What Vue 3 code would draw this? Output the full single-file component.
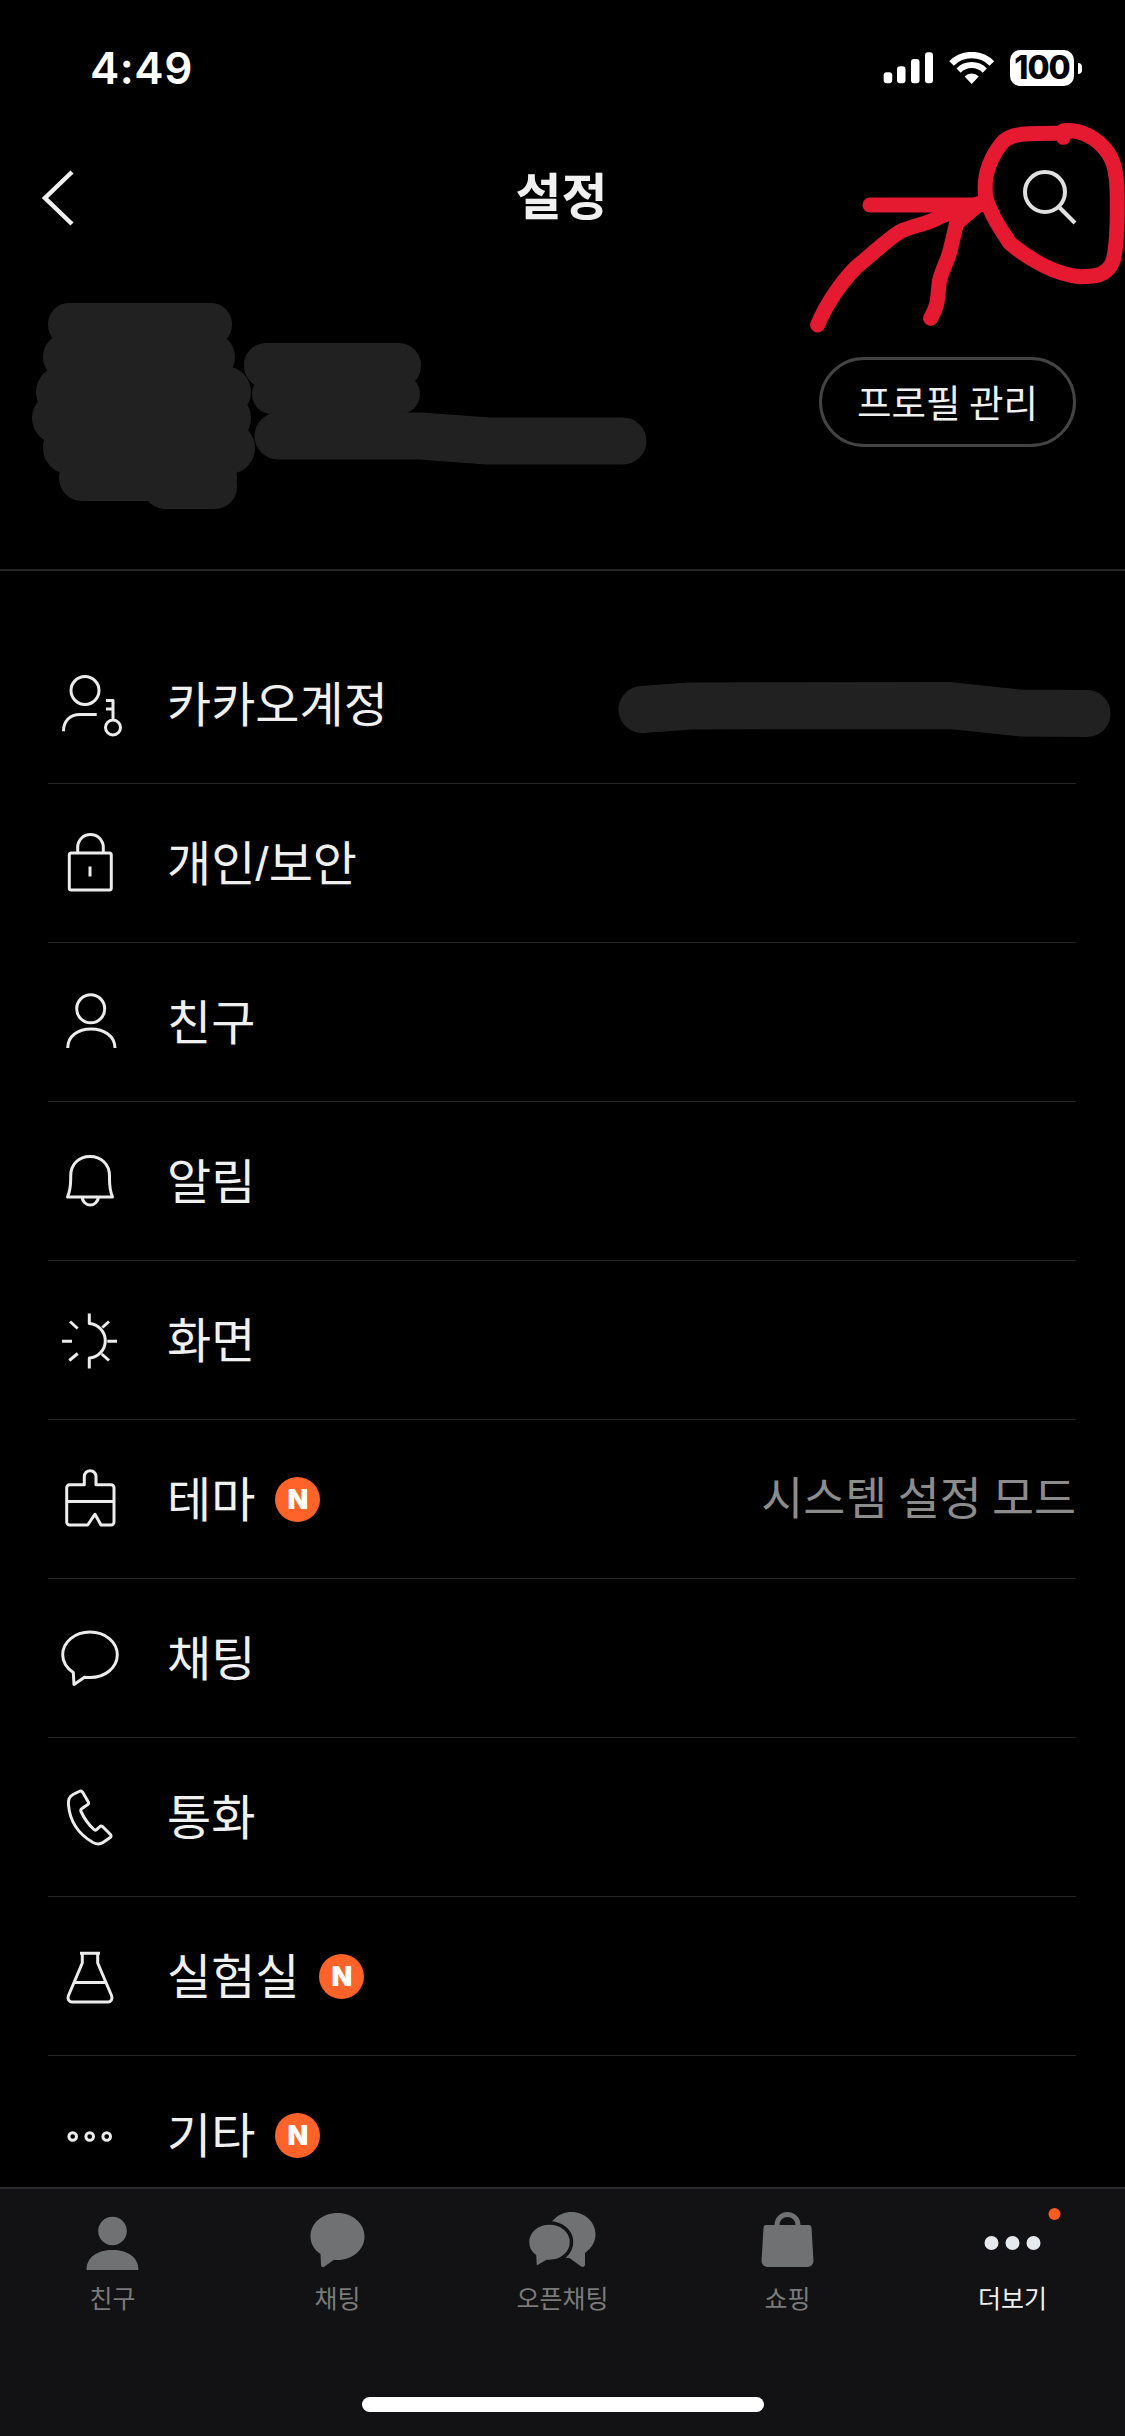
<script setup>
const c = (x, y, r) => `M${x - r} ${y}a${r} ${r} 0 1 0 ${2 * r} 0a${r} ${r} 0 1 0 ${-2 * r} 0Z`

const rows = [
  { label: '카카오계정', d: c(35, 26.5, 14) + 'M13.5 67.2C13.5 57 20 50.5 30 50.5H46.7' + c(63, 63.5, 7.5) + 'M63 56V36.5H56M56 45H63' },
  { label: '개인/보안', d: 'M21.3 30H59.3a2 2 0 0 1 2 2V65a2 2 0 0 1-2 2H21.3a2 2 0 0 1-2-2V32a2 2 0 0 1 2-2ZM27.7 30V24.3a12.8 12.8 0 0 1 25.6 0V30M40 43.5V53.5' },
  { label: '친구', d: c(40.7, 26.8, 14) + 'M17.7 66C17.7 54 28 47 41 47S65 54 65 66' },
  { label: '알림', d: 'M17.5 56H62.5C60 50 59.5 46 59.5 38V35C59.5 23 51 15.5 40 15.5S20.7 23 20.7 35V38C20.7 46 20 50 17.5 56ZM32 56A8.3 9 0 0 0 48.5 56' },
  { label: '화면', d: 'M39.3 13.5V23.5A17.3 17.3 0 0 1 39.3 58V68.5M57.3 41.2H67M12 41.2H22M20 21.5L27.7 28.5M19.3 60.5L27.7 53.5M59 21.5L52.3 27.5M59 60.5L51.7 54' },
  { label: '테마', badge: true, value: '시스템 설정 모드', d: 'M34.3 25.8V17.5a5.85 5.85 0 0 1 11.7 0V25.8H61a3 3 0 0 1 3 3V63a3 3 0 0 1-3 3H51L45 55.2L37.7 66H19.7a3 3 0 0 1-3-3V28.8a3 3 0 0 1 3-3ZM16.7 42.5H64' },
  { label: '채팅', d: 'M23.3 54.5C16.5 50 12.7 44 12.7 36.8C12.7 24 24.8 13.9 40 13.9S67.3 24 67.3 36.8S55 59.6 40 59.6C38 59.6 36 59.4 34.5 59.2L24 66.5Z' },
  { label: '통화', d: 'M29 14.5a3 3 0 0 1 3.5 .5L38.3 25a2 2 0 0 1-.5 2.5L32 31.5a2.5 2.5 0 0 0-1 3C34 41 39 48 44 52.5a2 2 0 0 0 2.5 .2L50 49.5a2 2 0 0 1 2.5 0L60.5 57.5a2 2 0 0 1-.3 3L53 65.5C50 67.5 46 67 43 65.5C30 58 20 46 18.5 28C18 23 20 19 23 17.5Z' },
  { label: '실험실', badge: true, d: 'M30 17.2H50M32.3 17.2V27L18.5 59.5C17 63 19 66 22 66H58C61 66 63 63 61.5 59.5L47.7 27V17.2M25 46.5H55' },
  { label: '기타', badge: true, d: c(22.7, 40.5, 3.8) + c(39.7, 40.5, 3.8) + c(56.7, 40.5, 3.8) },
]

const gray = '#707173'
const tabs = [
  { label: '친구', cx: 112.5, parts: [{ d: c(112, 2231, 14.3) + 'M86 2270C86 2257 97 2250 112 2250S138 2257 138 2270Z', fill: gray }] },
  { label: '채팅', cx: 337.5, parts: [{ d: 'M337 2213C322 2213 310 2223 310 2236.5C310 2244 314 2250 320 2254L320.5 2265C320.6 2267 322.5 2267.6 324 2266.5L333.5 2259.8C334.7 2260 335.8 2260 337 2260C352 2260 364 2249.5 364 2236.5S352 2213 337 2213Z', fill: gray }] },
  { label: '오픈채팅', cx: 562.5, parts: [
    { d: 'M571 2212C558 2212 547 2222 547 2235C547 2248 557 2258 569 2258L580 2266C582 2267.5 584.5 2267 584.5 2264.5L584.5 2253C591 2248 595 2242 595 2234C595 2222 584 2212 571 2212Z', fill: gray },
    { d: 'M549 2223C537 2223 527 2231 527 2242C527 2249 530 2253 534 2256L534.5 2265C534.6 2267 536.5 2267.6 538 2266.5L546.5 2261.4L549 2261.5C561 2261.5 571 2253 571 2242S561 2223 549 2223Z', fill: gray, stroke: '#121214', sw: 3.5 },
  ] },
  { label: '쇼핑', cx: 787.5, parts: [
    { d: 'M766 2225H808a3 3 0 0 1 3 3L813 2261a6 6 0 0 1-6 6H767a6 6 0 0 1-6-6L763 2228a3 3 0 0 1 3-3Z', fill: gray },
    { d: 'M776.5 2226V2225a10.5 10.5 0 0 1 21 0V2226', fill: 'none', stroke: gray, sw: 5 },
  ] },
  { label: '더보기', cx: 1012.5, active: true, parts: [
    { d: c(991, 2243, 7) + c(1012, 2243, 7) + c(1033, 2243, 7), fill: '#e6e9ee' },
    { d: c(1054, 2214, 6), fill: '#ff5a1f' },
  ] },
]
</script>

<template>
  <div class="page">
    <div class="status">
      <span class="time">4:49</span>
      <div class="status-right">
        <svg class="signal" width="50" height="32" viewBox="0 0 50 32">
          <rect x="0.7" y="20.3" width="8.5" height="11" rx="3" />
          <rect x="14" y="14.3" width="8.5" height="17" rx="3" />
          <rect x="28" y="7" width="8.5" height="24.3" rx="3" />
          <rect x="42" y="0.3" width="8" height="31" rx="3" />
        </svg>
        <svg class="wifi" width="46" height="32" viewBox="0 0 46 32">
          <path d="M2.55 11.45A28.5 28.5 0 0 1 42.85 11.45" fill="none" stroke="#fff" stroke-width="6.5" />
          <path d="M9.62 18.52A18.5 18.5 0 0 1 35.78 18.52" fill="none" stroke="#fff" stroke-width="6" />
          <path d="M22.7 32L15.6 24.5A10 10 0 0 1 29.8 24.5Z" fill="#fff" />
        </svg>
        <div class="battery"><span class="battery-level">100</span></div>
        <span class="battery-cap"></span>
      </div>
    </div>

    <div class="nav">
      <svg class="back" width="40" height="60" viewBox="0 0 40 60">
        <path d="M32 4L5 30L32 56" fill="none" stroke="#f0f0f0" stroke-width="4.5" />
      </svg>
      <span class="title">설정</span>
      <svg class="search" width="60" height="64" viewBox="0 0 60 64">
        <circle cx="25" cy="26" r="20" fill="none" stroke="#e0e0e0" stroke-width="4" />
        <path d="M38 40L55 57" fill="none" stroke="#e0e0e0" stroke-width="4" />
      </svg>
    </div>

    <div class="profile">
      <button class="manage">프로필 관리</button>
    </div>

    <div class="list">
      <div v-for="row in rows" :key="row.label" class="row">
        <svg class="row-icon" width="80" height="80" viewBox="0 0 80 80">
          <path :d="row.d" fill="none" stroke="#ececec" stroke-width="3" stroke-linejoin="round" />
        </svg>
        <span class="row-label">{{ row.label }}</span>
        <span v-if="row.badge" class="badge">N</span>
        <span v-if="row.value" class="row-value">{{ row.value }}</span>
      </div>
    </div>

    <div class="tabbar">
      <div class="tabs">
        <div v-for="tab in tabs" :key="tab.label" class="tab" :class="{ active: tab.active }">
          <svg width="120" height="70" :viewBox="`${tab.cx - 60} 2205 120 70`">
            <path v-for="(p, i) in tab.parts" :key="i" :d="p.d" :fill="p.fill" :stroke="p.stroke || 'none'" :stroke-width="p.sw || 0" />
          </svg>
          <span class="tab-label">{{ tab.label }}</span>
        </div>
      </div>
      <div class="home"></div>
    </div>

    <svg class="overlay" width="1125" height="2436" viewBox="0 0 1125 2436">
      <g fill="#212121">
        <rect x="48" y="303" width="184" height="43" rx="21" />
        <rect x="43" y="333" width="192" height="48" rx="24" />
        <rect x="36" y="366" width="215" height="52" rx="26" />
        <rect x="32" y="392" width="219" height="52" rx="26" />
        <rect x="43" y="422" width="212" height="52" rx="26" />
        <rect x="59" y="455" width="178" height="46" rx="23" />
        <rect x="143" y="465" width="94" height="44" rx="22" />
        <rect x="244" y="343" width="177" height="45" rx="22" />
        <rect x="252" y="374" width="168" height="40" rx="20" />
      </g>
      <path d="M278 436H420L488 441H623" fill="none" stroke="#212121" stroke-width="47" stroke-linecap="round" stroke-linejoin="round" />
      <path d="M642 709.5L690 706L950 705.5L1020 713L1087 713.5" fill="none" stroke="#212121" stroke-width="47" stroke-linecap="round" stroke-linejoin="round" />
      <g transform="translate(780 100) scale(0.3333)" fill="none" stroke="#e5192f" stroke-width="45" stroke-linecap="round" stroke-linejoin="round">
        <path d="M850 112V92C900 88 950 110 985 160C1012 200 1012 260 1012 320C1012 380 1010 440 1000 480C985 525 950 530 900 530C830 525 750 480 690 430C660 385 630 340 617 290C610 230 625 180 665 130C690 100 730 100 830 100" />
        <path d="M270 315H600" />
        <path d="M113 675C135 620 180 550 230 500C280 460 320 420 360 395C400 375 440 375 480 350L600 310" />
        <path d="M452 655C475 615 472 600 478 545C485 510 505 480 512 445L530 370L600 310" />
      </g>
    </svg>
  </div>
</template>

<style>
body {
  margin: 0;
  background: #000;
}
</style>

<style scoped>
.page {
  position: relative;
  width: 1125px;
  height: 2436px;
  display: flex;
  flex-direction: column;
  overflow: hidden;
  background: #000;
  color: #f0f0f0;
  font-family: "Noto Sans CJK KR", "Liberation Sans", sans-serif;
}
.status {
  flex: none;
  height: 136px;
  box-sizing: border-box;
  padding: 0 43px 0 90px;
  display: flex;
  align-items: center;
  justify-content: space-between;
}
.time {
  font-family: Inter, sans-serif;
  font-weight: 600;
  font-size: 44px;
  letter-spacing: 0.5px;
  color: #fff;
}
.status-right {
  display: flex;
  align-items: center;
}
.signal rect {
  fill: #fff;
}
.signal {
  margin-right: 16px;
}
.wifi {
  margin-right: 15px;
}
.battery {
  width: 64px;
  height: 36px;
  border-radius: 10px;
  background: #fff;
  display: flex;
  align-items: center;
  justify-content: center;
}
.battery-level {
  font-family: Inter, sans-serif;
  font-weight: 800;
  font-size: 32px;
  letter-spacing: -1px;
  line-height: 1;
  color: #000;
}
.battery-cap {
  width: 4px;
  height: 11px;
  margin-left: 4px;
  border-radius: 0 4px 4px 0;
  background: #fff;
}
.nav {
  flex: none;
  height: 120px;
  box-sizing: border-box;
  padding: 4px 45px 0 40px;
  display: grid;
  grid-template-columns: 1fr auto 1fr;
  align-items: center;
}
.back {
  justify-self: start;
}
.title {
  font-size: 50px;
  font-weight: 700;
  line-height: 1;
  padding-bottom: 10px;
  margin-left: 3px;
}
.search {
  justify-self: end;
}
.profile {
  flex: none;
  height: 315px;
  box-sizing: border-box;
  padding: 101px 49px 0 0;
  display: flex;
  justify-content: flex-end;
  align-items: flex-start;
  border-bottom: 2px solid #262626;
}
.manage {
  width: 257px;
  height: 90px;
  border: 3px solid #444;
  border-radius: 45px;
  background: transparent;
  color: #f0f0f0;
  font: 400 37.5px "Noto Sans CJK KR", sans-serif;
  padding: 0 0 3px;
}
.list {
  flex: 1;
  min-height: 0;
  overflow: hidden;
  padding: 54px 49px 0 48px;
}
.row {
  height: 159px;
  box-sizing: border-box;
  display: flex;
  align-items: center;
  border-bottom: 1px solid #262626;
  font-size: 48px;
}
.row:last-child {
  border-bottom: 0;
}
.row-icon {
  flex: none;
  margin: 0 37px 0 2px;
}
.row-label {
  font-family: "Liberation Sans", "Noto Sans CJK KR", sans-serif;
  color: #f0f0f0;
  line-height: 1;
  padding-top: 3px;
}
.badge {
  flex: none;
  width: 45px;
  height: 45px;
  margin-left: 20px;
  border-radius: 50%;
  background: #ff6329;
  color: #fff;
  display: flex;
  align-items: center;
  justify-content: center;
  font-family: Inter, sans-serif;
  font-weight: 900;
  font-size: 27px;
  line-height: 1;
}
.row-value {
  margin-left: auto;
  color: #8c8c8c;
  font-size: 45.7px;
  line-height: 1;
  padding-bottom: 6px;
}
.tabbar {
  flex: none;
  height: 249px;
  box-sizing: border-box;
  background: #121214;
  border-top: 2px solid #2a2a2b;
  display: flex;
  flex-direction: column;
}
.tabs {
  display: grid;
  grid-template-columns: repeat(5, 225px);
  padding-top: 16px;
}
.tab {
  display: flex;
  flex-direction: column;
  align-items: center;
  color: #7a7a7a;
}
.tab.active {
  color: #f0f0f0;
}
.tab-label {
  font-size: 25px;
  line-height: 44px;
}
.home {
  width: 402px;
  height: 15px;
  margin: 78px auto 0;
  border-radius: 8px;
  background: #fff;
}
.overlay {
  position: absolute;
  left: 0;
  top: 0;
  pointer-events: none;
}
</style>
